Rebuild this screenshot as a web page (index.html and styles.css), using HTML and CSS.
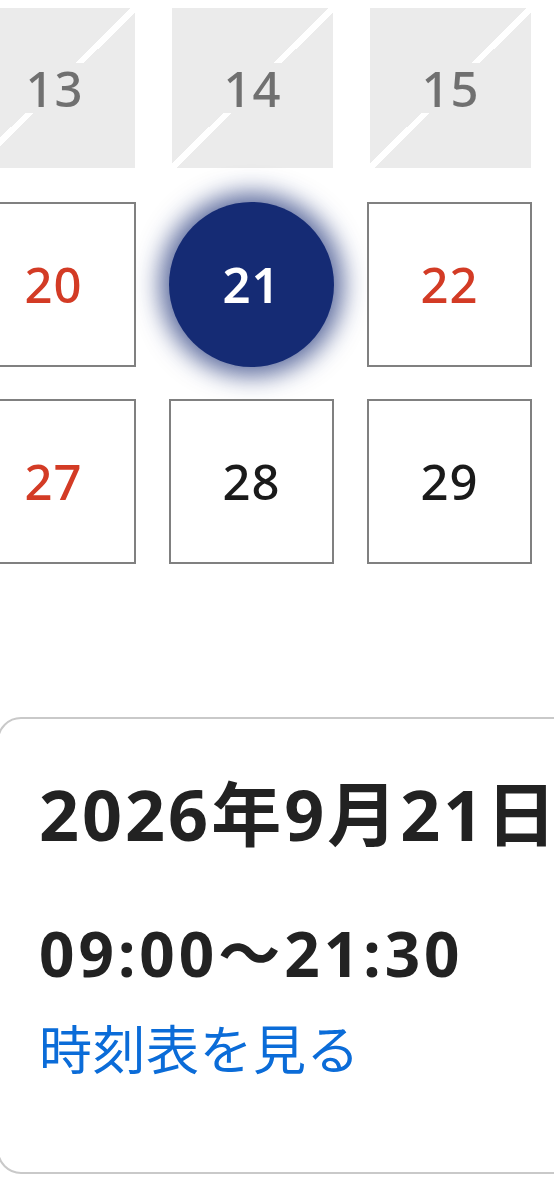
FILE: index.html
```html
<!DOCTYPE html>
<html lang="ja">
<head>
<meta charset="utf-8">
<title>カレンダー</title>
<link rel="stylesheet" href="styles.css">
</head>
<body>
<div class="calendar">
  <div class="day day--off"><span class="num">13</span></div>
  <div class="day day--off"><span class="num">14</span></div>
  <div class="day day--off"><span class="num">15</span></div>

  <div class="day day--holiday"><span class="num">20</span></div>
  <div class="day day--selected"><span class="num">21</span></div>
  <div class="day day--holiday"><span class="num">22</span></div>

  <div class="day day--holiday"><span class="num">27</span></div>
  <div class="day"><span class="num">28</span></div>
  <div class="day"><span class="num">29</span></div>
</div>

<section class="info">
  <h2 class="info-date">2026年9月21日</h2>
  <p class="info-time">09:00～21:30</p>
  <a class="info-link" href="#">時刻表を見る</a>
</section>
</body>
</html>
```

FILE: styles.css
```css
html, body {
  margin: 0;
  padding: 0;
  overflow-x: hidden;
  background: #ffffff;
}

body {
  font-family: "Noto Sans", "Noto Sans CJK JP", sans-serif;
  color: #222222;
}

.calendar {
  display: grid;
  grid-template-columns: repeat(3, 165px);
  grid-auto-rows: 165px;
  column-gap: 33px;
  row-gap: 32px;
  margin: 5px 0 0 -29px;
}

.day {
  box-sizing: border-box;
  display: flex;
  align-items: center;
  justify-content: center;
  border: 2px solid #808080;
  background: #ffffff;
  font-size: 49px;
  line-height: 1;
  font-weight: 500;
  letter-spacing: 1px;
  color: #1a1a1a;
}

.day--holiday {
  color: #d33b25;
}

.day--off {
  border: none;
  margin: 3px 1px 2px 3px;
  color: #707070;
  background: linear-gradient(to bottom right,
    #ebebeb calc(50% - 3px),
    #ffffff calc(50% - 3px),
    #ffffff calc(50% + 3px),
    #ebebeb calc(50% + 3px));
}

.day--off .num {
  background: #ebebeb;
  line-height: 50px;
  padding: 0 4px;
}

.day--selected {
  border: none;
  border-radius: 50%;
  background: #152b74;
  color: #ffffff;
  font-weight: 600;
  box-shadow: 0 0 24px 9px rgba(21, 43, 116, 0.7);
}

.info {
  box-sizing: border-box;
  width: 640px;
  margin: 153px 0 0 -3px;
  padding: 53px 40px 90px 40px;
  border: 2px solid #c9c9c9;
  border-radius: 24px;
}

.info-date {
  margin: 0;
  font-size: 70px;
  line-height: 84px;
  font-weight: 700;
  letter-spacing: 3px;
  color: #222222;
  white-space: nowrap;
}

.info-time {
  margin: 60px 0 0 0;
  font-size: 62px;
  line-height: 74px;
  font-weight: 700;
  letter-spacing: 4px;
  color: #222222;
  white-space: nowrap;
}

.info-link {
  display: block;
  margin-top: 28px;
  font-size: 53px;
  line-height: 64px;
  letter-spacing: 0.5px;
  color: #0b6cd8;
  text-decoration: none;
  white-space: nowrap;
}
```
